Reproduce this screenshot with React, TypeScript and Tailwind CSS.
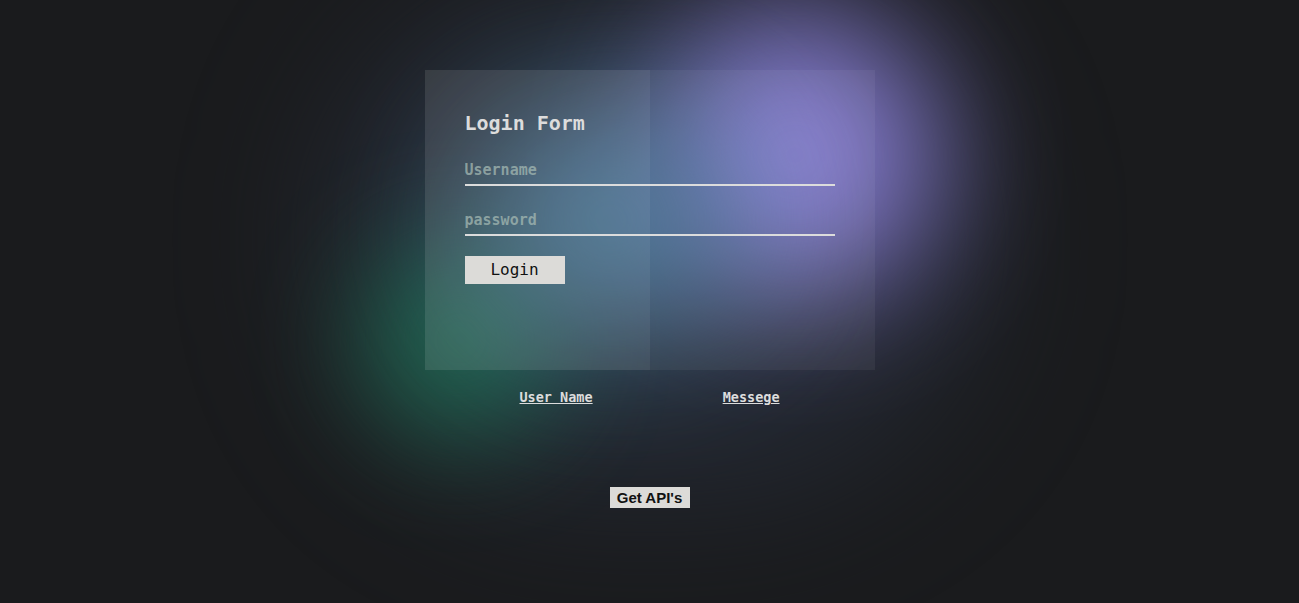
import React from "react";

export default function App() {
  return (
    <main className="relative min-h-[603px] w-full overflow-hidden bg-[#1a1b1d] font-['DejaVu_Sans_Mono',monospace]">
      {/* 背景の光 */}
      <div className="pointer-events-none absolute left-[320px] top-[-20px] h-[520px] w-[660px] rounded-full bg-[#2a3140] opacity-60 blur-[70px]"></div>
      <div className="pointer-events-none absolute left-[650px] top-[10px] h-[290px] w-[290px] rounded-full bg-[#8a7fd6] opacity-95 blur-[65px]"></div>
      <div className="pointer-events-none absolute left-[360px] top-[240px] h-[200px] w-[200px] rounded-full bg-[#1d6a50] opacity-85 blur-[55px]"></div>
      <div className="pointer-events-none absolute left-[470px] top-[100px] h-[240px] w-[280px] rounded-full bg-[#4d82a6] opacity-80 blur-[70px]"></div>

      <div className="relative z-10 flex flex-col items-center pt-[70px]">
        {/* ログインカード */}
        <div className="flex h-[300px] w-[450px] bg-white/[0.05]">
          <div className="w-[225px] bg-white/[0.06]"></div>
          <div className="w-[225px]"></div>
        </div>
        <form
          className="-mt-[300px] flex h-[300px] w-[450px] flex-col px-10 pt-[40px]"
          onSubmit={(e) => e.preventDefault()}
        >
          <h1 className="text-[20px] font-bold leading-[26px] text-[#dcdcdc]">Login Form</h1>
          <input
            type="text"
            placeholder="Username"
            className="mt-[20px] h-[30px] w-full border-b-2 border-[#dcdcdc] bg-transparent text-[15px] font-bold text-[#dcdcdc] outline-none placeholder:text-[#a3b8b2]/75"
          />
          <input
            type="password"
            placeholder="password"
            className="mt-[20px] h-[30px] w-full border-b-2 border-[#dcdcdc] bg-transparent text-[15px] font-bold text-[#dcdcdc] outline-none placeholder:text-[#a3b8b2]/75"
          />
          <button
            type="submit"
            className="mt-[20px] h-[28px] w-[100px] bg-[#dcdbd8] text-[16px] text-[#111]"
          >
            Login
          </button>
        </form>

        {/* 結果テーブル */}
        <div className="mt-[17px] flex gap-[130px] text-[13.5px] font-bold text-[#dcdcdc] underline">
          <span>User Name</span>
          <span>Messege</span>
        </div>

        <button className="mt-[80px] h-[21px] w-[80px] bg-[#dcdbd8] font-['Liberation_Sans',sans-serif] text-[15px] font-bold text-[#111]">
          Get API's
        </button>
      </div>
    </main>
  );
}
